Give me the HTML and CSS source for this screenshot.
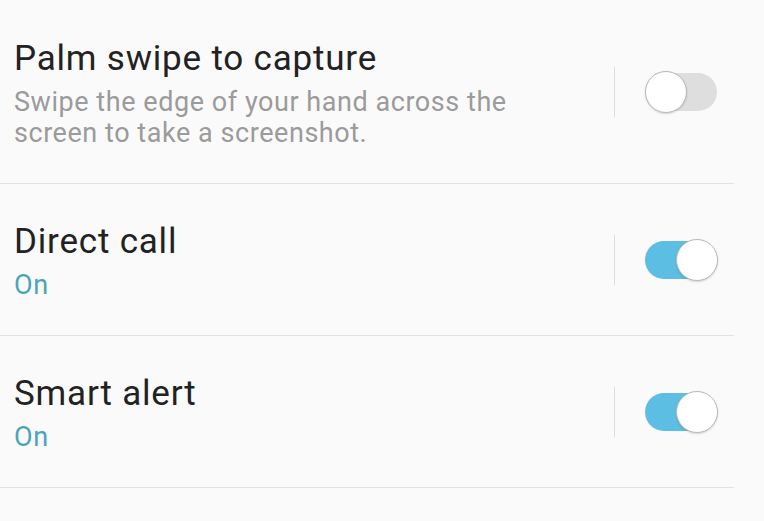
FILE: index.html
```html
<!DOCTYPE html>
<html lang="en">
<head>
    <meta charset="UTF-8">
    <meta name="viewport" content="width=device-width, initial-scale=1.0">
    <title>Motions and gestures</title>
    <link rel="stylesheet" href="styles.css">
</head>
<body>
    <div class="settings-list">
        <div class="setting-row first">
            <div class="setting-text">
                <div class="setting-title">Palm swipe to capture</div>
                <div class="setting-summary">Swipe the edge of your hand across the screen to take a screenshot.</div>
            </div>
            <div class="divider-v"></div>
            <div class="switch"></div>
        </div>
        <div class="setting-row">
            <div class="setting-text">
                <div class="setting-title">Direct call</div>
                <div class="setting-status">On</div>
            </div>
            <div class="divider-v"></div>
            <div class="switch on"></div>
        </div>
        <div class="setting-row">
            <div class="setting-text">
                <div class="setting-title">Smart alert</div>
                <div class="setting-status">On</div>
            </div>
            <div class="divider-v"></div>
            <div class="switch on"></div>
        </div>
    </div>
</body>
</html>
```

FILE: styles.css
```css
body {
    margin: 0;
    background-color: #fafafa;
    font-family: Roboto, "Noto Sans", sans-serif;
    width: 764px;
    height: 521px;
    overflow: hidden;
}
.settings-list {
    margin-right: 30px; /* las líneas terminan antes del borde */
}
.setting-row {
    display: flex;
    align-items: center;
    height: 151px;
    padding: 0 16px 0 14px;
    border-bottom: 1px solid #e2e2e2;
}
.setting-row.first {
    height: 183px;
}
.setting-text {
    flex: 1;
    padding-top: 4px;
}
.setting-title {
    font-size: 35px;
    line-height: 40px;
    letter-spacing: 0.8px;
    color: #222;
}
.setting-summary {
    margin-top: 8px;
    font-size: 27px;
    line-height: 31px;
    letter-spacing: 0.55px;
    color: #9b9b9b;
    max-width: 510px;
}
.setting-status {
    margin-top: 8px;
    font-size: 27px;
    line-height: 31px;
    letter-spacing: 0.55px;
    color: #4da4b8;
}
.divider-v {
    width: 1px;
    height: 50px;
    background-color: #dcdcdc;
    margin-right: 30px;
}

/* Interruptor */
.switch {
    position: relative;
    width: 73px;
    height: 42px;
}
.switch::before {
    content: "";
    position: absolute;
    left: 4px;
    right: 1px;
    top: 2px;
    height: 38px;
    border-radius: 19px;
    background-color: #dedede;
}
.switch::after {
    content: "";
    position: absolute;
    left: 0;
    top: 0;
    width: 40px;
    height: 40px;
    border-radius: 50%;
    background-color: #fff;
    border: 1px solid #b9b9b9;
    box-shadow: 0 1px 2px rgba(0, 0, 0, 0.15);
}
.switch.on::before {
    left: 0;
    right: 3px;
    background-color: #5cbee3;
}
.switch.on::after {
    left: auto;
    right: 0;
}
```
